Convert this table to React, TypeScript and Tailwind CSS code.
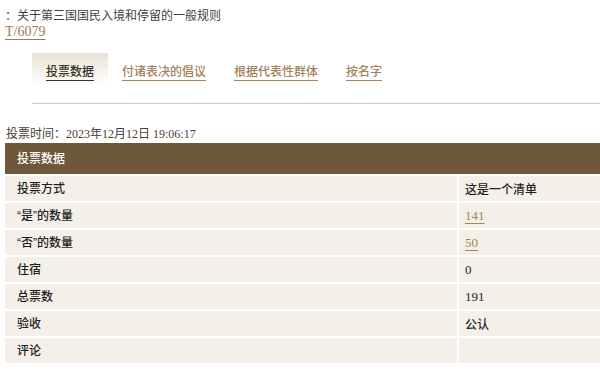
const serif = "font-['Liberation_Serif','Noto_Sans_CJK_SC',serif]";
const sans = "font-['Liberation_Sans','Noto_Sans_CJK_SC',sans-serif]";

const tabs = ["投票数据", "付诸表决的倡议", "根据代表性群体", "按名字"];

const rows: { label: string; value: string; link?: boolean }[] = [
  { label: "投票方式", value: "这是一个清单" },
  { label: "“是”的数量", value: "141", link: true },
  { label: "“否”的数量", value: "50", link: true },
  { label: "住宿", value: "0" },
  { label: "总票数", value: "191" },
  { label: "验收", value: "公认" },
  { label: "评论", value: "" },
];

export default function App() {
  return (
    <div className={`min-h-[374px] bg-white pl-[5px] pt-[6px] text-[12px] ${serif}`}>
      {/* title */}
      <p className="leading-[17px] text-[#45403a] font-['Noto_Sans_CJK_SC',sans-serif]">：关于第三国国民入境和停留的一般规则</p>
      <a href="#" className="inline-block text-[14px] leading-[18px] text-[#9a7b56] underline underline-offset-[3px] decoration-[#9a7b56]">
        T/6079
      </a>

      {/* tabs */}
      <div className="ml-[27px] mt-[12px] flex border-b border-[#c9c9c9] pb-[18px]">
        {tabs.map((t, i) => (
          <div
            key={t}
            className={`flex h-[32px] items-center px-[14px] pt-[3px] font-['Noto_Sans_CJK_SC',sans-serif] font-medium ${
              i === 0 ? "bg-gradient-to-b from-[#e9e1d5] to-white text-[#3b3026]" : "text-[#a3825b]"
            }`}
          >
            <span className="underline underline-offset-[4px] decoration-1">{t}</span>
          </div>
        ))}
      </div>

      {/* time */}
      <p className="mt-[23px] pl-[1px] leading-[14px] text-[#45403a]">投票时间：2023年12月12日 19:06:17</p>

      {/* table */}
      <div className={`mt-[2px] ${sans}`}>
        <div className="flex h-[31px] items-center bg-[#6f5739] pl-[12px] font-medium text-white">投票数据</div>
        {rows.map((r) => (
          <div key={r.label} className="flex h-[27px] border-t-2 border-white bg-[#f4f0e9]">
            <div className="flex w-[452px] items-center pl-[12px] font-medium text-[#1e1e1e]">{r.label}</div>
            <div className="w-[2px] bg-white" />
            <div className={`flex flex-1 items-center pl-[6px] text-[#1e1e1e] ${serif}`}>
              {r.link ? (
                <a href="#" className="text-[13px] text-[#a3825b] underline underline-offset-[3px]">
                  {r.value}
                </a>
              ) : (
                <span className={/\d/.test(r.value) ? "text-[13px]" : "font-['Noto_Sans_CJK_SC',sans-serif] font-medium"}>{r.value}</span>
              )}
            </div>
          </div>
        ))}
      </div>
    </div>
  );
}
